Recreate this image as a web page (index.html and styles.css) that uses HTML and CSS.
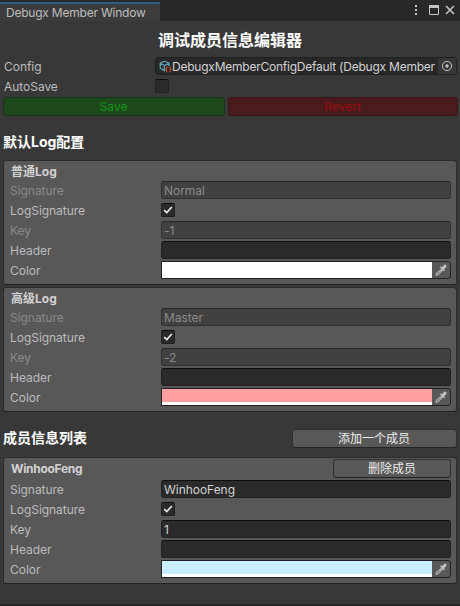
FILE: index.html
```
<!DOCTYPE html>
<html lang="zh-CN">
<head>
<meta charset="utf-8">
<title>Debugx Member Window</title>
<link rel="stylesheet" href="styles.css">
</head>
<body>
<svg class="defs" width="0" height="0">
  <symbol id="check" viewBox="0 0 14 14"><path d="M3.2 7.2 5.8 9.6 10.8 4" fill="none" stroke="#eee" stroke-width="1.6"/></symbol>
  <symbol id="picker" viewBox="0 0 12 12"><path d="M7.2 4.8 1.6 9.4 1.2 11.2 3 10.8 8 5.5" fill="none" stroke="#b4b4b4" stroke-width="1.2"/><path d="M5.4 2.7 9.5 6.8M7 5 9.6 2.4" fill="none" stroke="#c0c0c0" stroke-width="1.5"/><path d="M8.4 4 10.1 2" fill="none" stroke="#c4c4c4" stroke-width="2.8" stroke-linecap="round"/></symbol>
</svg>
<header class="bar">
  <div class="tab">Debugx Member Window</div>
  <svg class="controls" width="46" height="20" viewBox="0 0 46 20">
    <path d="M5 5h2v2H5zM5 9h2v2H5zM5 13h2v2H5z" fill="#c4c4c4"/>
    <path d="M19.5 6.5h9v8h-9z" fill="none" stroke="#c4c4c4"/><path d="M19 5h10v3H19z" fill="#c4c4c4"/>
    <path d="m36 6 8 8m0-8-8 8" stroke="#c4c4c4" stroke-width="1.6"/>
  </svg>
</header>
<main>
  <h1>调试成员信息编辑器</h1>
  <div class="row top">
    <label>Config</label>
    <div class="field object">
      <svg width="13" height="13" viewBox="0 0 13 13" fill="none"><path d="M5.5 1.2 10 3.2v3M5.5 1.2 1.2 3.2v5l4.2 2.4V5.5L1.2 3.2M5.5 5.5 10 3.2" stroke="#63a6bd" stroke-width="1.2"/><path d="M8.5 7Q7.2 7 7.5 9L6.8 9.5 7.5 10Q7.2 12 8.5 12M10.3 7Q11.6 7 11.3 9L12 9.5 11.3 10Q11.6 12 10.3 12" stroke="#d6522c" stroke-width="1.1"/></svg>
      <span>DebugxMemberConfigDefault (Debugx Member</span>
      <i class="pick"><svg width="12" height="12" viewBox="0 0 12 12"><circle cx="6" cy="6" r="4.6" fill="none" stroke="#c4c4c4"/><circle cx="6" cy="6" r="1.7" fill="#c4c4c4"/></svg></i>
    </div>
  </div>
  <div class="row top"><label>AutoSave</label><div class="check"></div></div>
  <div class="actions"><button class="save">Save</button><button class="revert">Revert</button></div>

  <h2>默认Log配置</h2>
  <section class="box">
    <h3>普通Log</h3>
    <div class="row off"><label>Signature</label><div class="field">Normal</div></div>
    <div class="row"><label>LogSignature</label><div class="check"><svg><use href="#check"/></svg></div></div>
    <div class="row off"><label>Key</label><div class="field">-1</div></div>
    <div class="row"><label>Header</label><div class="field"></div></div>
    <div class="row"><label>Color</label><div class="color"><div class="swatch white"></div><svg><use href="#picker"/></svg></div></div>
  </section>
  <section class="box">
    <h3>高级Log</h3>
    <div class="row off"><label>Signature</label><div class="field">Master</div></div>
    <div class="row"><label>LogSignature</label><div class="check"><svg><use href="#check"/></svg></div></div>
    <div class="row off"><label>Key</label><div class="field">-2</div></div>
    <div class="row"><label>Header</label><div class="field"></div></div>
    <div class="row"><label>Color</label><div class="color"><div class="swatch pink"></div><svg><use href="#picker"/></svg></div></div>
  </section>

  <div class="list-head"><h2>成员信息列表</h2><button>添加一个成员</button></div>
  <section class="box member">
    <div class="member-head"><h3>WinhooFeng</h3><button>删除成员</button></div>
    <div class="row"><label>Signature</label><div class="field">WinhooFeng</div></div>
    <div class="row"><label>LogSignature</label><div class="check"><svg><use href="#check"/></svg></div></div>
    <div class="row"><label>Key</label><div class="field">1</div></div>
    <div class="row"><label>Header</label><div class="field"></div></div>
    <div class="row"><label>Color</label><div class="color"><div class="swatch blue"></div><svg><use href="#picker"/></svg></div></div>
  </section>
</main>
</body>
</html>
```
FILE: styles.css
```
* { box-sizing: border-box; }
body {
  margin: 0;
  height: 606px;
  overflow: hidden;
  background: #383838;
  border-bottom: 2px solid #282828;
  color: #bcbcbc;
  font: 12px/18px Inter, "Noto Sans CJK SC", sans-serif;
  letter-spacing: -0.04px;
}
.defs { display: block; height: 0; }
h1, h2, h3 { margin: 0; font-weight: 700; letter-spacing: 0; }
.bar { display: flex; justify-content: space-between; height: 21px; padding-top: 2px; background: #282828; }
.tab { width: 160px; padding-left: 6px; border-top: 2px solid #2c5d87; background: #3c3c3c; letter-spacing: -0.22px; }
.controls { margin: -2px 4px 0 0; }
main { padding: 0 3px; }
h1 { height: 36px; padding-top: 1px; line-height: 36px; font-size: 16px; text-align: center; color: #fff; }
h2 { height: 18px; font-size: 14px; line-height: 18px; color: #fff; }
h3 { height: 18px; padding-left: 7px; font-size: 12px; line-height: 20px; color: #d2d2d2; }
.row { display: flex; height: 18px; margin: 0 5px 2px 6px; }
.row label { width: 151px; flex: none; line-height: 20px; white-space: nowrap; }
.row.top { margin: 0 0 2px; }
.row.top label { width: 152px; padding-left: 1px; }
.field {
  flex: 1;
  min-width: 0;
  height: 18px;
  padding: 0 2px;
  border: 1px solid #212121;
  border-top-color: #0d0d0d;
  border-radius: 3px;
  background: #2a2a2a;
  color: #d2d2d2;
  line-height: 18px;
}
.object { display: flex; padding: 0 0 0 3px; background: #282828; border-color: #202020; white-space: nowrap; }
.object > svg { flex: none; margin: 2px 0 0; }
.object span { flex: 1; min-width: 0; overflow: hidden; letter-spacing: -0.23px; }
.pick { display: flex; width: 18px; flex: none; align-items: center; justify-content: center; background: #373737; }
.check { width: 14px; height: 14px; margin-top: 2px; border: 1px solid #212121; border-top-color: #0d0d0d; border-radius: 2px; background: #2a2a2a; }
.check svg { display: block; width: 14px; height: 14px; margin: -1px; }
.off label { color: #898989; }
.off .field { background: #414141; border-color: #313131; border-top-color: #282828; color: #898989; }
.actions { display: flex; gap: 3px; margin-right: -1px; }
button {
  height: 19px;
  padding: 0;
  border: 1px solid #303030;
  border-bottom-color: #242424;
  border-radius: 3px;
  background: #585858;
  color: #eee;
  font: inherit;
  letter-spacing: inherit;
  line-height: 17px;
}
.actions button { padding-right: 1px; letter-spacing: 0.05px; }
.save { width: 222px; background: #1d491d; border-color: #173517; color: #149614; }
.revert { flex: 1; background: #491b1d; border-color: #351719; color: #970d0d; }
.actions + h2 { margin: 17px 0 9px; }
.box { height: 125px; margin-bottom: 2px; padding: 1px 0 0; border: 1px solid #2c2c2c; border-bottom-color: #222; border-radius: 3px; background: #585858; }
.box h3 + .row { margin-top: 1px; }
.color { display: flex; flex: 1; height: 18px; border: 1px solid #212121; border-radius: 0 3px 3px 0; }
.swatch { flex: 1; border-bottom: 3px solid #fff; }
.color svg { width: 12px; height: 12px; margin: 2px 3px; }
.white { background: #fff; }
.pink { background: #ff9f9f; }
.blue { background: #c8efff; }
.list-head { display: flex; justify-content: space-between; margin: 17px 0 9px; }
.list-head button { width: 165px; padding-right: 1px; }
.member { height: 127px; }
.member-head { display: flex; justify-content: space-between; margin: 0 5px 2px 0; }
.member-head h3 { letter-spacing: -0.3px; }
.member-head button { width: 118px; }
```
